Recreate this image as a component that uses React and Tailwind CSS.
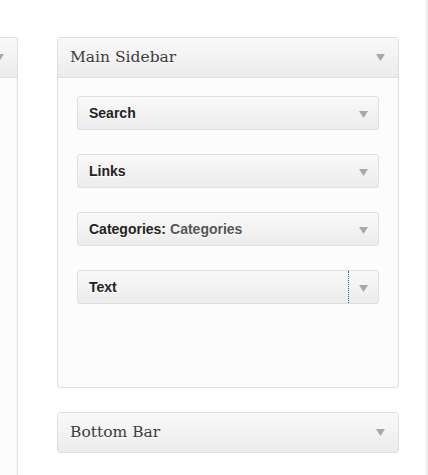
const serif = { fontFamily: '"DejaVu Serif", Georgia, serif' }
const sans = { fontFamily: '"Liberation Sans", Arial, sans-serif' }

function Arrow({ className = '' }) {
  return (
    <svg width="9" height="7" viewBox="0 0 9 7" className={className}>
      <path d="M0 0h9L4.5 7z" fill="#a8a8a8" />
    </svg>
  )
}

function SidebarHeader({ title }) {
  return (
    <div className="h-[39px] flex items-center justify-between pl-[12px] pr-[13px] bg-gradient-to-b from-[#f9f9f9] to-[#ececec] rounded-t-[3px]">
      <h3
        className="text-[15.5px] text-[#3a3a3a] [text-shadow:0_1px_0_#fff] whitespace-nowrap"
        style={serif}
      >
        {title}
      </h3>
      <Arrow />
    </div>
  )
}

function Widget({ title, sub, focused }) {
  return (
    <div className="h-[34px] flex items-stretch border border-[#dfdfdf] rounded-[3px] bg-gradient-to-b from-[#f9f9f9] to-[#ececec]">
      <div
        className="flex-1 flex items-center pl-[11px] text-[14px] font-bold text-[#222] [text-shadow:0_1px_0_#fff]"
        style={sans}
      >
        {title}
        {sub && <span className="text-[#555] ml-1">{sub}</span>}
      </div>
      <div
        className={`w-[30px] flex items-center justify-center pt-[2px] ${
          focused ? 'border-l border-dotted border-[#1b5f80]' : ''
        }`}
      >
        <Arrow />
      </div>
    </div>
  )
}

const widgets = [
  { title: 'Search' },
  { title: 'Links' },
  { title: 'Categories:', sub: 'Categories' },
  { title: 'Text', focused: true },
]

export default function App() {
  return (
    <div className="w-[428px] h-[475px] bg-white overflow-hidden flex">
      {/* left column, mostly off screen */}
      <div className="w-[342px] ml-[-324px] mt-[37px] shrink-0 border border-[#dfdfdf] rounded-t-[3px] bg-[#fcfcfc] border-b-0">
        <div className="border-b border-[#dfdfdf]">
          <SidebarHeader title="" />
        </div>
      </div>

      {/* middle column */}
      <div className="w-[342px] ml-[39px] mt-[37px] shrink-0 flex flex-col">
        <div className="border border-[#dfdfdf] rounded-[3px] bg-[#fcfcfc] shadow-[0_1px_0_#fff]">
          <div className="border-b border-[#dfdfdf]">
            <SidebarHeader title="Main Sidebar" />
          </div>
          <div className="px-[19px] pt-[18px] min-h-[309px] flex flex-col gap-[24px]">
            {widgets.map((w) => (
              <Widget key={w.title} {...w} />
            ))}
          </div>
        </div>

        <div className="mt-[24px] border border-[#dfdfdf] rounded-[3px]">
          <SidebarHeader title="Bottom Bar" />
        </div>
      </div>

      {/* right column edge */}
      <div className="ml-[27px] w-[10px] shrink-0 border-l-2 border-[#ececec] bg-white" />
    </div>
  )
}
